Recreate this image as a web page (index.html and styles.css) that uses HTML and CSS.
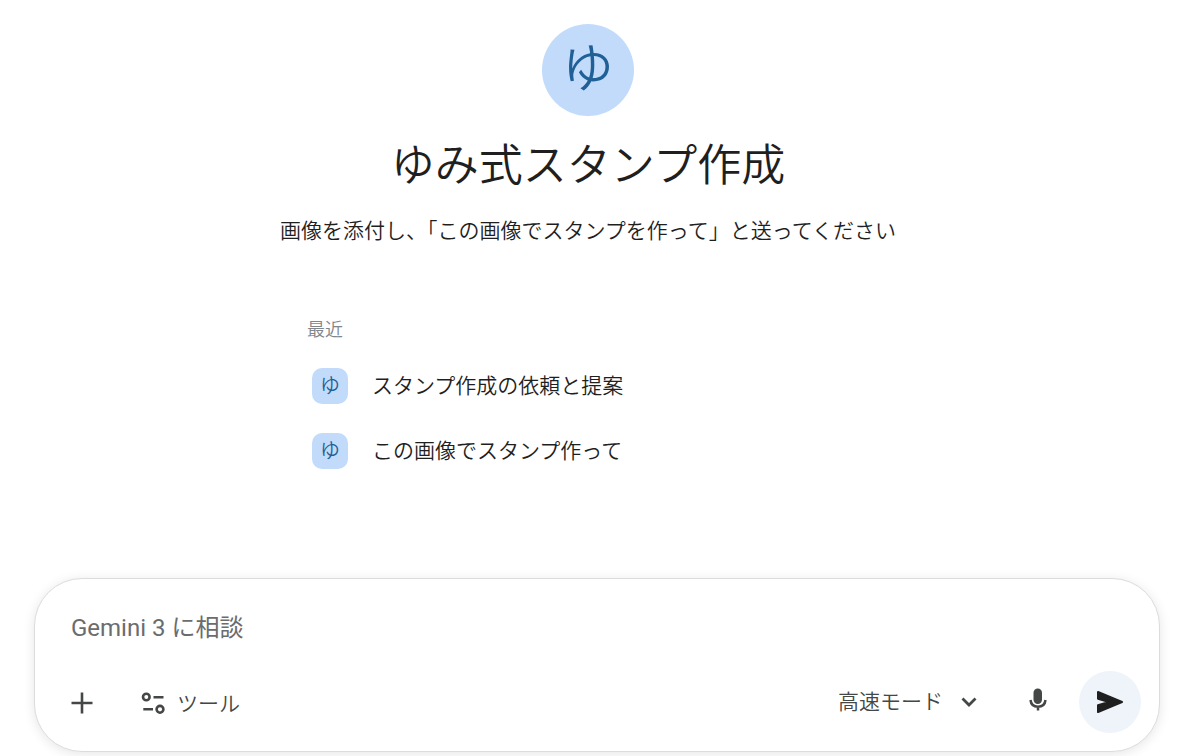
FILE: index.html
```html
<!DOCTYPE html>
<html lang="ja">
<head>
<meta charset="utf-8">
<meta name="viewport" content="width=device-width, initial-scale=1">
<title>ゆみ式スタンプ作成</title>
<link rel="stylesheet" href="styles.css">
</head>
<body>
<main class="intro">
  <div class="avatar">ゆ</div>
  <h1 class="title">ゆみ式スタンプ作成</h1>
  <p class="lead">画像を添付し、「この画像でスタンプを作って」と送ってください</p>
  <section class="recent">
    <h2 class="recent-title">最近</h2>
    <ul class="recent-list">
      <li><a class="recent-item" href="#"><span class="badge">ゆ</span><span class="recent-name">スタンプ作成の依頼と提案</span></a></li>
      <li><a class="recent-item" href="#"><span class="badge">ゆ</span><span class="recent-name">この画像でスタンプ作って</span></a></li>
    </ul>
  </section>
</main>
<form class="composer">
  <input class="prompt" type="text" placeholder="Gemini 3 に相談" aria-label="Gemini 3 に相談">
  <div class="toolbar">
    <button class="plain" type="button" aria-label="追加">
      <svg width="22" height="24" viewBox="0 0 22 24" fill="none" stroke="currentColor" stroke-width="2.6"><path d="M11 2.500V23.500M0.500 13H21.500"/></svg>
    </button>
    <button class="plain tools" type="button">
      <svg width="24" height="24" viewBox="0 0 24 24" fill="none" stroke="currentColor" stroke-width="2.600"><circle cx="5.300" cy="7" r="3.300"/><path d="M12.500 7.300H22.500M2.300 19.300H12"/><circle cx="19" cy="19.300" r="3.400"/></svg>
      <span>ツール</span>
    </button>
    <div class="mode">
      <select class="mode-select" aria-label="モード"><option>高速モード</option></select>
      <svg class="chevron" width="16" height="16" viewBox="0 0 16 16" fill="none" stroke="currentColor" stroke-width="2.800"><path d="M1.500 4.500L8 11L14.500 4.500"/></svg>
    </div>
    <button class="plain" type="button" aria-label="マイク">
      <svg width="18" height="28" viewBox="0 0 18 28" fill="none" stroke="currentColor"><rect x="4.500" y="0.500" width="8.500" height="15.500" rx="4.200" fill="currentColor" stroke="none"/><path d="M1.500 12C2 16.500 5 18.700 9 18.700S16 16.500 16.500 12M9 19V22.500" stroke-width="2.500"/></svg>
    </button>
    <button class="send" type="submit" aria-label="送信">
      <svg width="28" height="24" viewBox="0 0 28 24" fill="currentColor" stroke="currentColor" stroke-width="2" stroke-linejoin="round"><path d="M2 2L26 12L2 22V15.200L13 12L2 8.800Z"/></svg>
    </button>
  </div>
</form>
</body>
</html>
```
FILE: styles.css
```css
* {
  box-sizing: border-box;
}

body {
  margin: 0;
  background: #fff;
  color: #1f1f1f;
  font-family: Roboto, "Noto Sans CJK JP", sans-serif;
  font-weight: 350;
}

.intro {
  display: flex;
  flex-direction: column;
  align-items: center;
  padding: 24px 24px 0 0;
}

.avatar {
  display: grid;
  place-items: center;
  width: 92px;
  height: 92px;
  border-radius: 50%;
  background: #c2dbfb;
  color: #1f6097;
  font-size: 52px;
  line-height: 1;
}

.title {
  margin: 22px 0 0;
  font-size: 44px;
  font-weight: 350;
  line-height: 56px;
}

.lead {
  margin: 23px 0 0;
  font-size: 21px;
  line-height: 28px;
}

.recent {
  width: 100%;
  max-width: 562px;
  margin-top: 73px;
}

.recent-title {
  margin: 0;
  color: #80868b;
  font-size: 18px;
  font-weight: 350;
  line-height: 24px;
}

.recent-list {
  margin: 11px 0 0;
  padding: 0;
  list-style: none;
}

.recent-item {
  display: flex;
  align-items: center;
  gap: 24px;
  height: 65px;
  padding-left: 5px;
  color: inherit;
  font-size: 21px;
  text-decoration: none;
}

.recent-name {
  padding-bottom: 4px;
}

.badge {
  display: grid;
  place-items: center;
  width: 36px;
  height: 36px;
  border-radius: 10px;
  background: #c2dbfb;
  color: #1f6097;
  font-size: 20px;
  line-height: 1;
}

.composer {
  margin: 95px 40px 4px 34px;
  padding: 28px 18px 18px 36px;
  border: 1px solid #dcdcdc;
  border-radius: 48px;
  background: #fff;
  box-shadow: 0 2px 12px rgba(0, 0, 0, 0.1);
}

.prompt {
  display: block;
  width: 100%;
  height: 42px;
  padding: 0;
  border: 0;
  outline: 0;
  background: none;
  color: #1f1f1f;
  font: inherit;
  font-size: 24px;
  font-weight: 400;
}

.prompt::placeholder {
  color: #6a6c6e;
  opacity: 1;
}

.toolbar {
  display: flex;
  align-items: center;
  margin-top: 22px;
  color: #444746;
}

.plain,
.send {
  display: flex;
  align-items: center;
  padding: 0;
  border: 0;
  background: none;
  color: inherit;
  font: inherit;
  font-size: 21px;
}

.tools {
  gap: 12px;
  margin-left: 48px;
}

.mode {
  display: grid;
  align-items: center;
  margin-left: auto;
  margin-right: 52px;
}

.mode-select {
  grid-area: 1 / 1;
  appearance: none;
  padding: 0 34px 0 0;
  border: 0;
  background: none;
  color: inherit;
  font: inherit;
  font-size: 21px;
}

.chevron {
  grid-area: 1 / 1;
  justify-self: end;
  pointer-events: none;
}

.send {
  justify-content: center;
  width: 62px;
  height: 62px;
  margin-left: 32px;
  border-radius: 50%;
  background: #eff3fa;
  color: #1f1f1f;
}
```
